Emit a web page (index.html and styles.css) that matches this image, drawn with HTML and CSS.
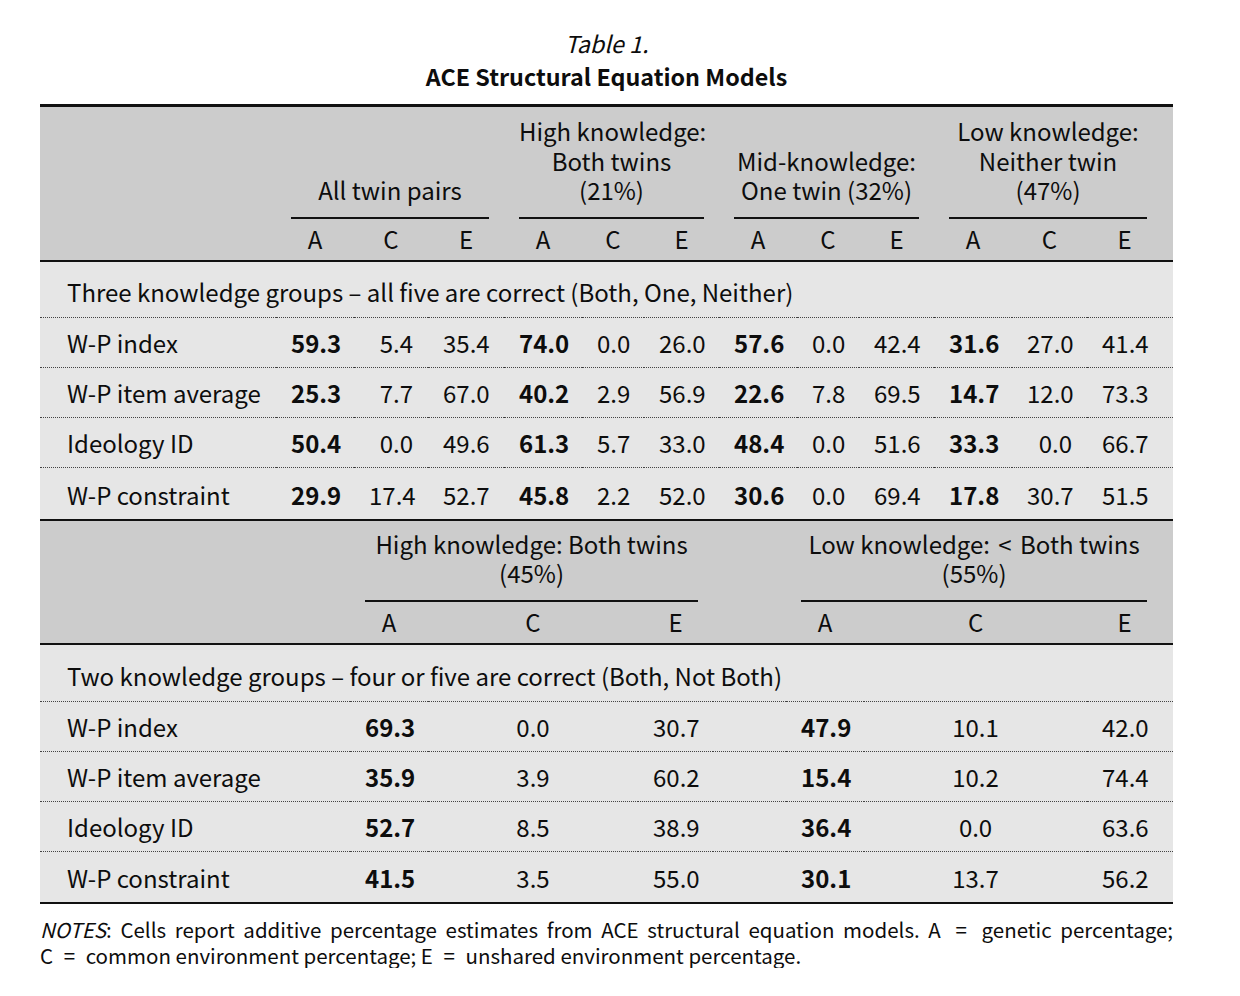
FILE: index.html
```html
<!DOCTYPE html>
<html lang="en">
<head>
<meta charset="utf-8">
<title>ACE Structural Equation Models</title>
<link rel="stylesheet" href="styles.css">
</head>
<body>
<div class="page">
  <div class="caption">
    <div class="cap-num">Table 1.</div>
    <div class="cap-title">ACE Structural Equation Models</div>
  </div>

  <table class="t t1">
    <colgroup>
      <col style="width:236px"><col style="width:78px"><col style="width:74px"><col style="width:76px">
      <col style="width:78px"><col style="width:62px"><col style="width:75px">
      <col style="width:78px"><col style="width:62px"><col style="width:75px">
      <col style="width:78px"><col style="width:75px"><col style="width:86px">
    </colgroup>
    <thead>
      <tr class="grp">
        <th class="first"></th>
        <th colspan="3"><div class="gl">All twin pairs</div></th>
        <th colspan="3"><div class="gl">High knowledge:<br>Both twins<br>(21%)</div></th>
        <th colspan="3"><div class="gl">Mid-knowledge:<br>One twin (32%)</div></th>
        <th colspan="3" class="last"><div class="gl">Low knowledge:<br>Neither twin<br>(47%)</div></th>
      </tr>
      <tr class="sub">
        <th class="first"></th>
        <th>A</th><th>C</th><th>E</th>
        <th>A</th><th>C</th><th>E</th>
        <th>A</th><th>C</th><th>E</th>
        <th>A</th><th>C</th><th class="last">E</th>
      </tr>
    </thead>
    <tbody>
      <tr class="sect"><td colspan="13" class="first">Three knowledge groups – all five are correct (Both, One, Neither)</td></tr>
      <tr>
        <td class="first">W-P index</td>
        <td class="b">59.3</td><td>5.4</td><td>35.4</td>
        <td class="b">74.0</td><td>0.0</td><td>26.0</td>
        <td class="b">57.6</td><td>0.0</td><td>42.4</td>
        <td class="b">31.6</td><td>27.0</td><td class="last">41.4</td>
      </tr>
      <tr>
        <td class="first">W-P item average</td>
        <td class="b">25.3</td><td>7.7</td><td>67.0</td>
        <td class="b">40.2</td><td>2.9</td><td>56.9</td>
        <td class="b">22.6</td><td>7.8</td><td>69.5</td>
        <td class="b">14.7</td><td>12.0</td><td class="last">73.3</td>
      </tr>
      <tr>
        <td class="first">Ideology ID</td>
        <td class="b">50.4</td><td>0.0</td><td>49.6</td>
        <td class="b">61.3</td><td>5.7</td><td>33.0</td>
        <td class="b">48.4</td><td>0.0</td><td>51.6</td>
        <td class="b">33.3</td><td>0.0</td><td class="last">66.7</td>
      </tr>
      <tr class="end">
        <td class="first">W-P constraint</td>
        <td class="b">29.9</td><td>17.4</td><td>52.7</td>
        <td class="b">45.8</td><td>2.2</td><td>52.0</td>
        <td class="b">30.6</td><td>0.0</td><td>69.4</td>
        <td class="b">17.8</td><td>30.7</td><td class="last">51.5</td>
      </tr>
    </tbody>
  </table>

  <table class="t t2">
    <colgroup>
      <col style="width:310px"><col style="width:78px"><col style="width:210px"><col style="width:75px">
      <col style="width:73px"><col style="width:78px"><col style="width:223px"><col style="width:86px">
    </colgroup>
    <thead>
      <tr class="grp">
        <th class="first"></th>
        <th colspan="3"><div class="gl">High knowledge: Both twins<br>(45%)</div></th>
        <th></th>
        <th colspan="3" class="last"><div class="gl">Low knowledge: <span class="lt">&lt;</span> Both twins<br>(55%)</div></th>
      </tr>
      <tr class="sub">
        <th class="first"></th>
        <th>A</th><th>C</th><th>E</th>
        <th></th>
        <th>A</th><th>C</th><th class="last">E</th>
      </tr>
    </thead>
    <tbody>
      <tr class="sect"><td colspan="8" class="first">Two knowledge groups – four or five are correct (Both, Not Both)</td></tr>
      <tr>
        <td class="first">W-P index</td>
        <td class="b">69.3</td><td>0.0</td><td>30.7</td><td></td>
        <td class="b">47.9</td><td>10.1</td><td class="last">42.0</td>
      </tr>
      <tr>
        <td class="first">W-P item average</td>
        <td class="b">35.9</td><td>3.9</td><td>60.2</td><td></td>
        <td class="b">15.4</td><td>10.2</td><td class="last">74.4</td>
      </tr>
      <tr>
        <td class="first">Ideology ID</td>
        <td class="b">52.7</td><td>8.5</td><td>38.9</td><td></td>
        <td class="b">36.4</td><td>0.0</td><td class="last">63.6</td>
      </tr>
      <tr class="end">
        <td class="first">W-P constraint</td>
        <td class="b">41.5</td><td>3.5</td><td>55.0</td><td></td>
        <td class="b">30.1</td><td>13.7</td><td class="last">56.2</td>
      </tr>
    </tbody>
  </table>

  <div class="notes">
    <span class="n1"><em>NOTES</em>: Cells report additive percentage estimates from ACE structural equation models. A <span class="eq">=</span> genetic percentage;</span>
    <span class="n2">C <span class="eq">=</span> common environment percentage; E <span class="eq">=</span> unshared environment percentage.</span>
  </div>
</div>
</body>
</html>
```

FILE: styles.css
```css
html, body {
  margin: 0;
  padding: 0;
  background: #ffffff;
}

body {
  font-family: "Noto Sans CJK KR", "Noto Sans", sans-serif;
  color: #0d0d0d;
  font-size: 24px;
}

.page {
  width: 1133px;
  margin-left: 40px;
  padding-top: 27px;
}

.caption {
  text-align: center;
  line-height: 33px;
  font-size: 23.3px;
  margin-bottom: 11px;
}

.cap-num {
  font-style: italic;
}

.cap-title {
  font-weight: 700;
}

.t {
  width: 1133px;
  border-collapse: collapse;
  table-layout: fixed;
  line-height: 29.5px;
}

.t th,
.t td {
  padding: 0 15px;
  font-weight: 400;
  white-space: nowrap;
}

.t .first {
  padding-left: 27px;
}

.t .last {
  padding-right: 26px;
}

.t thead {
  background: #cccccc;
}

.t tbody {
  background: #e6e6e6;
}

.t1 {
  border-top: 3px solid #111111;
}

.t thead {
  border-bottom: 2px solid #111111;
}

.t tbody tr.end {
  border-bottom: 2px solid #111111;
}

.t .grp th {
  vertical-align: bottom;
  text-align: center;
  padding-top: 9px;
}

.t2 .grp th {
  padding-top: 8px;
}

.gl {
  border-bottom: 2px solid #111111;
  padding-bottom: 12px;
}

.lt {
  margin: 0 3px;
}

.t .sub th {
  height: 41px;
  text-align: center;
  vertical-align: middle;
  padding-top: 0;
  padding-bottom: 0;
}

.t1 td {
  text-align: right;
}

.t2 td {
  text-align: center;
}

.t td.first {
  text-align: left;
}

.t tbody tr {
  border-bottom: 1px dotted #444444;
}

.t tbody td {
  height: 48px;
  vertical-align: middle;
  padding-top: 1px;
  padding-bottom: 0;
}

.t tbody tr.sect td {
  height: 50px;
  padding-top: 5px;
}

.t2 tbody tr.sect td {
  height: 49px;
  padding-top: 7px;
}

.t tbody tr.end td {
  height: 48px;
  padding-top: 3px;
}

.t2 tbody tr.end td {
  height: 47px;
  padding-top: 3px;
}

.t td.b {
  font-weight: 700;
}

.notes {
  margin-top: 12px;
  font-size: 20.5px;
  line-height: 26px;
}

.notes span.n1,
.notes span.n2 {
  display: block;
}

.notes .n1 {
  text-align: justify;
  text-align-last: justify;
}

.notes .eq {
  margin: 0 6px;
}

.notes em {
  font-style: italic;
}
```
